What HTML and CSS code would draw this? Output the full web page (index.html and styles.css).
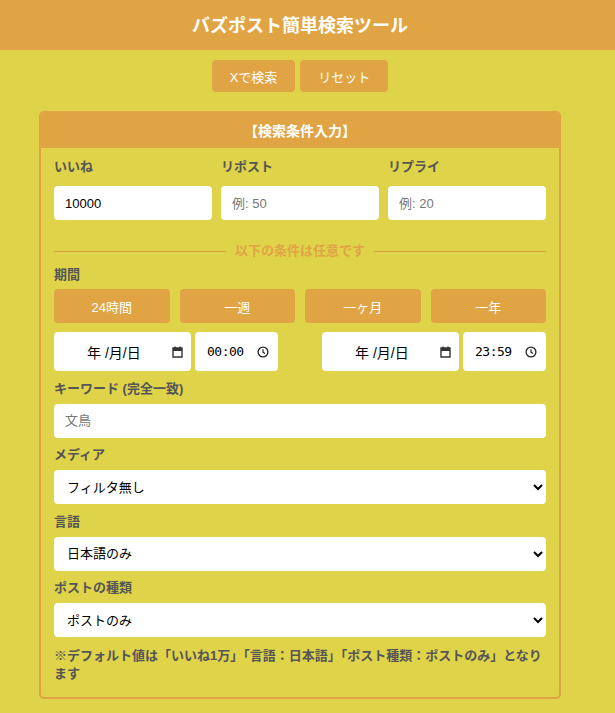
FILE: index.html
```html
<!DOCTYPE html>
<html lang="ja">
<head>
  <meta charset="UTF-8">
  <title>バズポスト簡単検索ツール</title>
  <link rel="stylesheet" href="styles.css">
</head>
<body>
  <header>
    <h1>バズポスト簡単検索ツール</h1>
  </header>

  <main class="page">
    <div class="actions">
      <button class="btn">Xで検索</button>
      <button class="btn">リセット</button>
    </div>

    <div class="card">
      <div class="card-title">【検索条件入力】</div>
      <div class="card-body">
        <div class="row3">
          <div>
            <label class="lbl top">いいね</label>
            <input type="number" class="field" value="10000">
          </div>
          <div>
            <label class="lbl top">リポスト</label>
            <input type="number" class="field" placeholder="例: 50">
          </div>
          <div>
            <label class="lbl top">リプライ</label>
            <input type="number" class="field" placeholder="例: 20">
          </div>
        </div>

        <div class="divider"><span>以下の条件は任意です</span></div>

        <label class="lbl first">期間</label>
        <div class="periods">
          <button class="period">24時間</button>
          <button class="period">一週</button>
          <button class="period">一ヶ月</button>
          <button class="period">一年</button>
        </div>

        <div class="range">
          <div class="pair">
            <div class="date">
              <span class="dtext">年 /月/日</span>
              <svg width="11" height="12" viewBox="0 0 11 12"><path d="M1 2h9v9H1z" fill="none" stroke="#333" stroke-width="1.4"/><rect x="1" y="2" width="9" height="3" fill="#333"/><path d="M3 0.5v2 M8 0.5v2" stroke="#333" stroke-width="1.4"/></svg>
            </div>
            <div class="time">
              <span class="ttext">00:00</span>
              <svg width="12" height="12" viewBox="0 0 12 12"><circle cx="6" cy="6" r="4.9" fill="none" stroke="#222" stroke-width="1.3"/><path d="M6 3.2v3l2 1.4" fill="none" stroke="#222" stroke-width="1.2"/></svg>
            </div>
          </div>
          <div class="pair">
            <div class="date">
              <span class="dtext">年 /月/日</span>
              <svg width="11" height="12" viewBox="0 0 11 12"><path d="M1 2h9v9H1z" fill="none" stroke="#333" stroke-width="1.4"/><rect x="1" y="2" width="9" height="3" fill="#333"/><path d="M3 0.5v2 M8 0.5v2" stroke="#333" stroke-width="1.4"/></svg>
            </div>
            <div class="time">
              <span class="ttext">23:59</span>
              <svg width="12" height="12" viewBox="0 0 12 12"><circle cx="6" cy="6" r="4.9" fill="none" stroke="#222" stroke-width="1.3"/><path d="M6 3.2v3l2 1.4" fill="none" stroke="#222" stroke-width="1.2"/></svg>
            </div>
          </div>
        </div>

        <label class="lbl">キーワード (完全一致)</label>
        <input type="text" class="field" placeholder="文鳥">

        <label class="lbl">メディア</label>
        <select class="field sel">
          <option>フィルタ無し</option>
        </select>

        <label class="lbl">言語</label>
        <select class="field sel">
          <option>日本語のみ</option>
        </select>

        <label class="lbl">ポストの種類</label>
        <select class="field sel">
          <option>ポストのみ</option>
        </select>

        <p class="note">※デフォルト値は「いいね1万」「言語：日本語」「ポスト種類：ポストのみ」となります</p>
      </div>
    </div>
  </main>
</body>
</html>
```

FILE: styles.css
```css
body {
  font-family: "Liberation Sans", "Noto Sans CJK JP", sans-serif;
  background: #dfd34a;
  margin: 0;
  padding-bottom: 20px;
}

/* content column is 600px wide, as with a scrollbar beside it */
header {
  background: #e1a444;
  height: 50px;
  display: flex;
  align-items: center;
  justify-content: center;
  padding-right: 15px;
}

.page {
  width: 600px;
}

h1 {
  margin: 0;
  color: white;
  font-size: 18px;
  padding-bottom: 2px;
}

.actions {
  display: flex;
  justify-content: center;
  gap: 5px;
  margin: 10px 0 19px;
}

.btn {
  font-family: inherit;
  font-size: 13px;
  color: white;
  background: #e1a444;
  border: none;
  border-radius: 4px;
  height: 32px;
  padding: 0 18px;
}

.card {
  width: 518px;
  margin: 0 auto;
  border: 2px solid #e1a444;
  border-radius: 5px;
  overflow: hidden;
}

.card-title {
  background: #e1a444;
  color: white;
  font-weight: bold;
  font-size: 14px;
  text-align: center;
  height: 35px;
  line-height: 37px;
}

.card-body {
  padding: 10px 13px 14px;
}

.row3 {
  display: grid;
  grid-template-columns: repeat(3, 1fr);
  gap: 9px;
}

.lbl {
  display: block;
  color: #555;
  font-weight: bold;
  font-size: 13px;
  line-height: 18px;
  margin: 8.5px 0 6px;
}

.lbl.top {
  margin: 0 0 10px;
}

.lbl.first {
  margin: 6px 0 5px;
}

.field {
  display: block;
  width: 100%;
  box-sizing: border-box;
  height: 34px;
  border: none;
  border-radius: 4px;
  background: white;
  padding: 0 11px;
  font-family: inherit;
  font-size: 13px;
  color: #000;
}

.field::placeholder {
  color: #777;
}

.sel {
  padding: 0 9px;
}

.divider {
  display: flex;
  align-items: center;
  gap: 9px;
  margin-top: 22px;
  color: #e1a444;
  font-weight: bold;
  font-size: 13px;
  line-height: 18px;
}

.divider::before,
.divider::after {
  content: "";
  flex: 1;
  border-top: 1px solid #d9a040;
}

.periods {
  display: grid;
  grid-template-columns: repeat(4, 1fr);
  gap: 10px;
}

.period {
  font-family: inherit;
  font-size: 13px;
  color: white;
  background: #e1a444;
  border: none;
  border-radius: 4px;
  height: 34px;
}

.range {
  display: flex;
  justify-content: space-between;
  margin-top: 9px;
}

.pair {
  display: flex;
  gap: 4px;
}

.date,
.time {
  height: 39px;
  background: white;
  border-radius: 4px;
  display: flex;
  align-items: center;
  box-sizing: border-box;
  font-size: 14px;
  color: #000;
}

.date {
  width: 137px;
  padding: 0 8px 0 33px;
  justify-content: space-between;
}

.time {
  width: 83px;
  padding: 0 9px 0 12px;
  justify-content: space-between;
}

.ttext {
  font-family: "DejaVu Sans Mono", monospace;
  font-size: 13px;
  letter-spacing: -0.5px;
}

.note {
  margin: 10px 0 0;
  color: #555;
  font-weight: bold;
  font-size: 13px;
  line-height: 18px;
}
```
